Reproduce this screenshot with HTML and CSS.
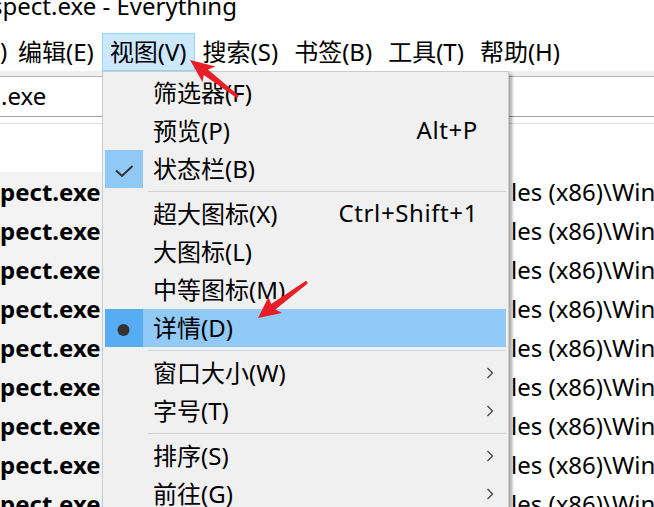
FILE: index.html
```html
<!DOCTYPE html>
<html lang="zh">
<head>
<meta charset="utf-8">
<title>Everything</title>
<link rel="stylesheet" href="styles.css">
</head>
<body>
<div class="window">
  <div class="title"><span class="title-text">spect.exe - Everything</span></div>
  <div class="menubar">
    <span class="mi first">)</span>
    <span class="mi">编辑(E)</span>
    <span class="mi active">视图(V)</span>
    <span class="mi">搜索(S)</span>
    <span class="mi">书签(B)</span>
    <span class="mi">工具(T)</span>
    <span class="mi">帮助(H)</span>
  </div>
  <div class="strip"></div>
  <div class="search"><span class="search-text">.exe</span></div>
  <div class="gap"></div>
  <div class="header"></div>
  <div class="rows">
    <div class="row"><span class="name">pect.exe</span><span class="path">les (x86)\Windows Kits\10\bin</span></div>
    <div class="row"><span class="name">pect.exe</span><span class="path">les (x86)\Windows Kits\10\bin</span></div>
    <div class="row"><span class="name">pect.exe</span><span class="path">les (x86)\Windows Kits\10\bin</span></div>
    <div class="row"><span class="name">pect.exe</span><span class="path">les (x86)\Windows Kits\10\bin</span></div>
    <div class="row"><span class="name">pect.exe</span><span class="path">les (x86)\Windows Kits\10\bin</span></div>
    <div class="row"><span class="name">pect.exe</span><span class="path">les (x86)\Windows Kits\10\bin</span></div>
    <div class="row"><span class="name">pect.exe</span><span class="path">les (x86)\Windows Kits\10\bin</span></div>
    <div class="row"><span class="name">pect.exe</span><span class="path">les (x86)\Windows Kits\10\bin</span></div>
    <div class="row"><span class="name">pect.exe</span><span class="path">les (x86)\Windows Kits\10\bin</span></div>
  </div>

  <div class="menu">
    <div class="item"><span class="chk"></span><span class="label">筛选器(F)</span><span class="key"></span><span class="sub"></span></div>
    <div class="item"><span class="chk"></span><span class="label">预览(P)</span><span class="key">Alt+P</span><span class="sub"></span></div>
    <div class="item"><span class="chk checked"><svg class="ico" width="38" height="38" viewBox="0 0 38 38"><polyline points="11,20.5 17,26 27.5,16" fill="none" stroke="#333" stroke-width="2"/></svg></span><span class="label">状态栏(B)</span><span class="key"></span><span class="sub"></span></div>
    <div class="sep"></div>
    <div class="item"><span class="chk"></span><span class="label">超大图标(X)</span><span class="key">Ctrl+Shift+1</span><span class="sub"></span></div>
    <div class="item"><span class="chk"></span><span class="label">大图标(L)</span><span class="key"></span><span class="sub"></span></div>
    <div class="item"><span class="chk"></span><span class="label">中等图标(M)</span><span class="key"></span><span class="sub"></span></div>
    <div class="item hot"><span class="chk"><svg class="ico" width="38" height="38" viewBox="0 0 38 38"><circle cx="18.5" cy="21" r="6" fill="#333"/></svg></span><span class="label">详情(D)</span><span class="key"></span><span class="sub"></span></div>
    <div class="sep"></div>
    <div class="item"><span class="chk"></span><span class="label">窗口大小(W)</span><span class="key"></span><span class="sub"><svg width="8" height="12" viewBox="0 0 8 12"><polyline points="1.5,1 6.5,6 1.5,11" fill="none" stroke="#444" stroke-width="1.3"/></svg></span></div>
    <div class="item"><span class="chk"></span><span class="label">字号(T)</span><span class="key"></span><span class="sub"><svg width="8" height="12" viewBox="0 0 8 12"><polyline points="1.5,1 6.5,6 1.5,11" fill="none" stroke="#444" stroke-width="1.3"/></svg></span></div>
    <div class="sep"></div>
    <div class="item"><span class="chk"></span><span class="label">排序(S)</span><span class="key"></span><span class="sub"><svg width="8" height="12" viewBox="0 0 8 12"><polyline points="1.5,1 6.5,6 1.5,11" fill="none" stroke="#444" stroke-width="1.3"/></svg></span></div>
    <div class="item"><span class="chk"></span><span class="label">前往(G)</span><span class="key"></span><span class="sub"><svg width="8" height="12" viewBox="0 0 8 12"><polyline points="1.5,1 6.5,6 1.5,11" fill="none" stroke="#444" stroke-width="1.3"/></svg></span></div>
  </div>

  <svg class="arrows" width="654" height="507" viewBox="0 0 654 507">
    <polygon fill="#e81e26" points="190,60 202.5,82 203.8,75 237.1,98.2 238.9,95.8 207.9,69.4 215.5,66.5"/>
    <polygon fill="#e81e26" points="258,318 282,313 275.4,309.6 307.9,283.2 306.1,280.8 271.2,304 268.5,297"/>
  </svg>
</div>
</body>
</html>
```
FILE: styles.css
```css
* { box-sizing: border-box; }

html, body {
  margin: 0;
  padding: 0;
}

body {
  width: 654px;
  height: 507px;
  overflow: hidden;
  background: #ffffff;
  font-family: "Noto Sans", "Noto Sans CJK SC", sans-serif;
  color: #000;
}

.window {
  position: relative;
  width: 654px;
  height: 507px;
  overflow: hidden;
}

.title {
  height: 33px;
  overflow: hidden;
  font-size: 24px;
  line-height: 24px;
  white-space: nowrap;
}

.title-text {
  display: block;
  margin-top: -6px;
  margin-left: -9px;
}

.menubar {
  height: 38px;
  display: flex;
  align-items: center;
  font-size: 24px;
  white-space: nowrap;
}

.mi {
  height: 38px;
  line-height: 35px;
  padding: 0 7px;
  border: 1px solid transparent;
}

.mi.first {
  width: 10px;
  padding: 0;
  border: none;
  overflow: hidden;
}

.mi.active {
  background: #cce8ff;
  border-color: #99d1ff;
}

.strip {
  height: 5px;
  background: #f0f0f0;
}

.search {
  height: 41px;
  border-top: 1px solid #b4b4b4;
  border-bottom: 1px solid #a0a0a0;
  font-size: 24px;
  line-height: 38px;
  white-space: nowrap;
}

.search-text {
  padding-left: 1px;
}

.gap {
  height: 7px;
  border-bottom: 1px solid #e0e0e0;
}

.header {
  height: 48px;
}

.row {
  display: flex;
  height: 39px;
  line-height: 39px;
  font-size: 24px;
  white-space: nowrap;
}

.name {
  flex: none;
  width: 102px;
  background: #f3f3f3;
  font-weight: 700;
  overflow: hidden;
}

.path {
  margin-left: 409px;
  overflow: hidden;
}

.menu {
  position: absolute;
  left: 102px;
  top: 71px;
  width: 407px;
  padding: 2px;
  background: #f0f0f0;
  border: 1px solid #cccccc;
  box-shadow: 3px 3px 3px rgba(0, 0, 0, 0.35);
  font-size: 24px;
  white-space: nowrap;
}

.item {
  display: grid;
  grid-template-columns: 38px 1fr auto 28px;
  align-items: center;
  height: 38px;
}

.chk {
  width: 38px;
  height: 38px;
  display: block;
}

.chk.checked {
  background: #90c8f6;
}

.ico {
  display: block;
}

.label {
  padding-left: 10px;
  padding-bottom: 3px;
}

.key {
  text-align: right;
  letter-spacing: 0.6px;
  padding-bottom: 3px;
}

.sub {
  display: flex;
  align-items: center;
  padding-left: 8px;
}

.sub svg {
  display: block;
}

.item.hot {
  background: #91c9f7;
}

.item.hot .chk {
  background: #56adf4;
}

.sep {
  height: 1px;
  margin: 3px 0 3px 43px;
  background: #d4d4d4;
}

.arrows {
  position: absolute;
  left: 0;
  top: 0;
  pointer-events: none;
}
```
